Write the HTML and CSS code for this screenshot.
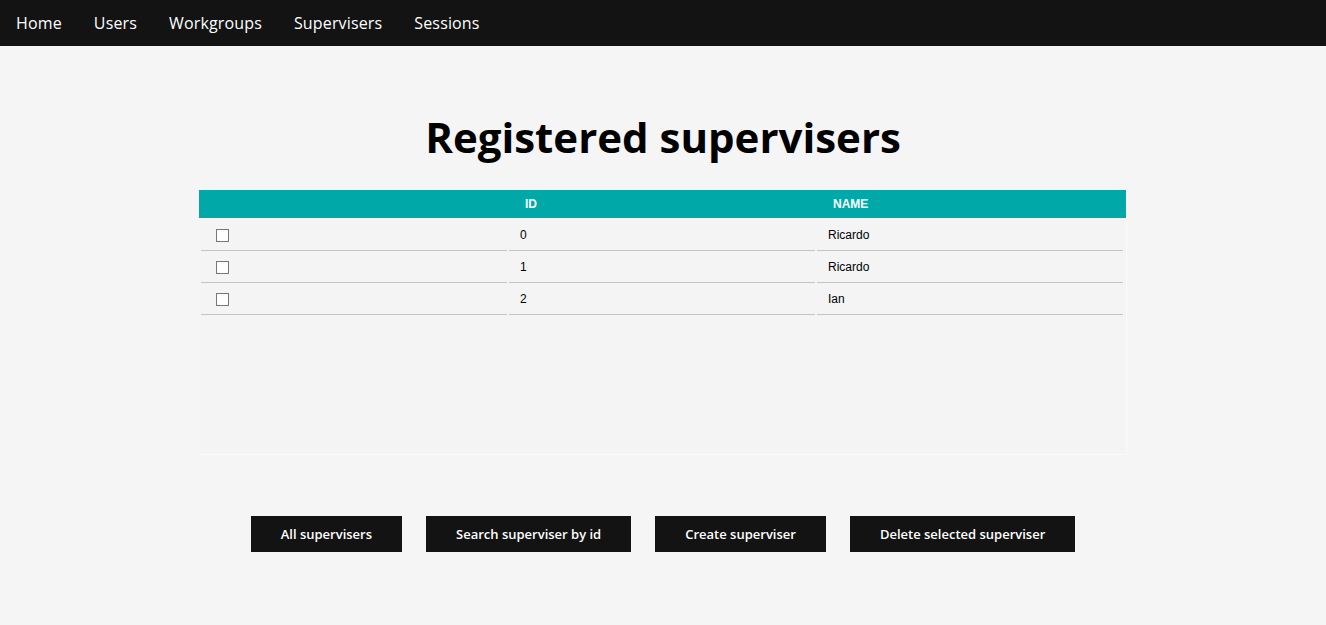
FILE: index.html
```html
<!DOCTYPE html>
<html>
<head>
<meta charset="utf-8">
<link rel="stylesheet" href="styles.css">
</head>
<body>
<nav class="navbar">
  <a class="nav-link" href="#">Home</a>
  <a class="nav-link" href="#">Users</a>
  <a class="nav-link" href="#">Workgroups</a>
  <a class="nav-link" href="#">Supervisers</a>
  <a class="nav-link" href="#">Sessions</a>
</nav>
<main class="content">
  <h1 class="title">Registered supervisers</h1>
  <section class="table-box">
    <div class="table-head">
      <div class="th"></div>
      <div class="th">ID</div>
      <div class="th">NAME</div>
    </div>
    <div class="table-body">
      <div class="td"><input type="checkbox" class="check"></div>
      <div class="td">0</div>
      <div class="td">Ricardo</div>
      <div class="td"><input type="checkbox" class="check"></div>
      <div class="td">1</div>
      <div class="td">Ricardo</div>
      <div class="td"><input type="checkbox" class="check"></div>
      <div class="td">2</div>
      <div class="td">Ian</div>
    </div>
  </section>
  <div class="actions">
    <button class="btn">All supervisers</button>
    <button class="btn">Search superviser by id</button>
    <button class="btn">Create superviser</button>
    <button class="btn">Delete selected superviser</button>
  </div>
</main>
</body>
</html>
```

FILE: styles.css
```css
* { box-sizing: border-box; }
html, body { margin: 0; padding: 0; }
body {
  background: #f5f5f5;
  font-family: "Open Sans", "Noto Sans", sans-serif;
  color: #000;
}
.navbar {
  height: 46px;
  background: #131313;
  display: flex;
  align-items: center;
  padding-left: 0;
}
.nav-link {
  color: #fff;
  text-decoration: none;
  font-size: 16px;
  letter-spacing: 0.15px;
  padding: 0 16px;
  line-height: 46px;
}
.content {
  display: flex;
  flex-direction: column;
  align-items: center;
}
.title {
  margin: 63px 0 0;
  font-size: 42px;
  font-weight: 700;
  line-height: 56px;
  height: 81px;
}
.table-box {
  width: 928px;
  min-height: 265px;
  background: #f4f4f4;
  border-right: 1px solid #fafafa;
  border-bottom: 1px solid #fafafa;
  font-family: "Liberation Sans", Arial, sans-serif;
  font-size: 12px;
}
.table-head {
  height: 28px;
  background: #00a8a8;
  display: grid;
  grid-template-columns: 1fr 1fr 1fr;
  gap: 2px;
  padding: 0 3px 0 2px;
}
.th {
  color: #fff;
  font-weight: 700;
  line-height: 28px;
  padding-left: 16px;
}
.table-body {
  display: grid;
  grid-template-columns: 1fr 1fr 1fr;
  column-gap: 2px;
  padding: 1px 3px 0 2px;
}
.td {
  height: 32px;
  border-bottom: 1px solid #c4c4c4;
  padding: 1px 0 0 11px;
  display: flex;
  align-items: center;
}
.check {
  appearance: none;
  -webkit-appearance: none;
  margin: 0 0 0 4px;
  width: 13px;
  height: 13px;
  border: 1px solid #767676;
  background: #fff;
  border-radius: 0;
}
.actions {
  display: flex;
  gap: 24px;
  margin-top: 61px;
}
.btn {
  background: #131313;
  color: #fff;
  border: none;
  height: 36px;
  padding: 0 30px;
  font-family: "Open Sans", "Noto Sans", sans-serif;
  font-size: 13px;
  font-weight: 600;
}
```
